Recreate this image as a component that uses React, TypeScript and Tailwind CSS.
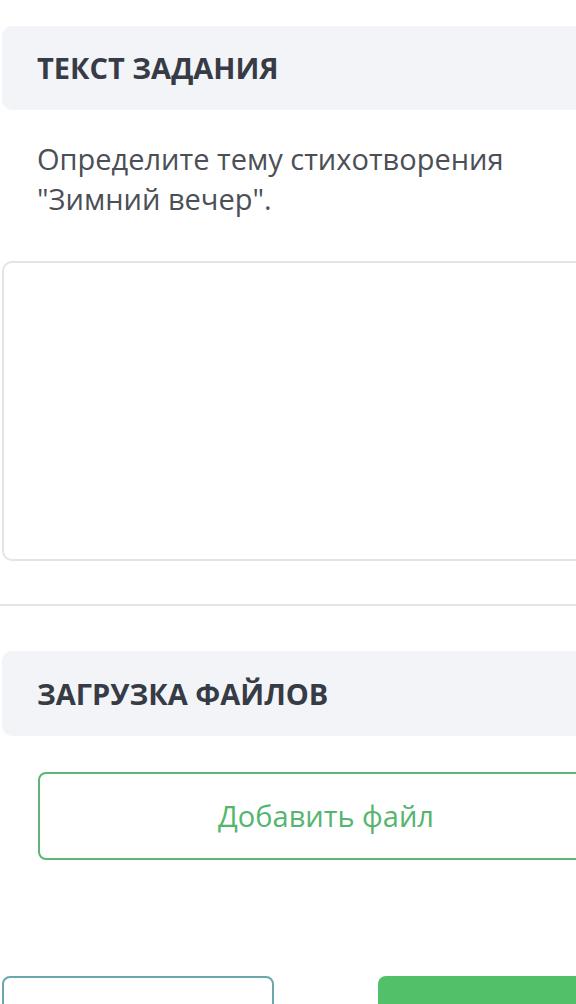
import React from "react";

export default function App() {
  return (
    <div
      className="w-[576px] h-[1004px] overflow-hidden bg-white"
      style={{ fontFamily: '"Open Sans", "Noto Sans", sans-serif' }}
    >
      <div className="w-[648px] ml-[2px] pt-[26px]">
        <div className="h-[84px] rounded-[10px] bg-[#f3f4f8] flex items-center pl-[35px]">
          <span className="text-[29px] font-bold text-[#363b45]">ТЕКСТ ЗАДАНИЯ</span>
        </div>
        <p className="mt-[29px] pl-[35px] text-[29px] leading-[40px] text-[#4b4f56] w-[560px]">
          Определите тему стихотворения "Зимний вечер".
        </p>
        <div className="mt-[42px] h-[300px] rounded-[10px] border-2 border-[#e4e4e4] bg-white" />
      </div>
      <div className="mt-[43px] h-[2px] bg-[#e4e4e4] w-full" />
      <div className="w-[648px] ml-[2px] pt-[45px]">
        <div className="h-[85px] rounded-[10px] bg-[#f3f4f8] flex items-center pl-[35px]">
          <span className="text-[29px] font-bold text-[#363b45]">ЗАГРУЗКА ФАЙЛОВ</span>
        </div>
        <div className="px-[36px] mt-[36px]">
          <div className="h-[88px] rounded-[8px] border-2 border-[#5cb57a] flex items-center justify-center">
            <span className="text-[29px] text-[#55b56f]">Добавить файл</span>
          </div>
        </div>
        <div className="mt-[116px] flex justify-between">
          <div className="w-[272px] h-[80px] rounded-[8px] border-2 border-[#6aa8ae] bg-white" />
          <div className="w-[272px] h-[80px] rounded-[8px] bg-[#52c068]" />
        </div>
      </div>
    </div>
  );
}
